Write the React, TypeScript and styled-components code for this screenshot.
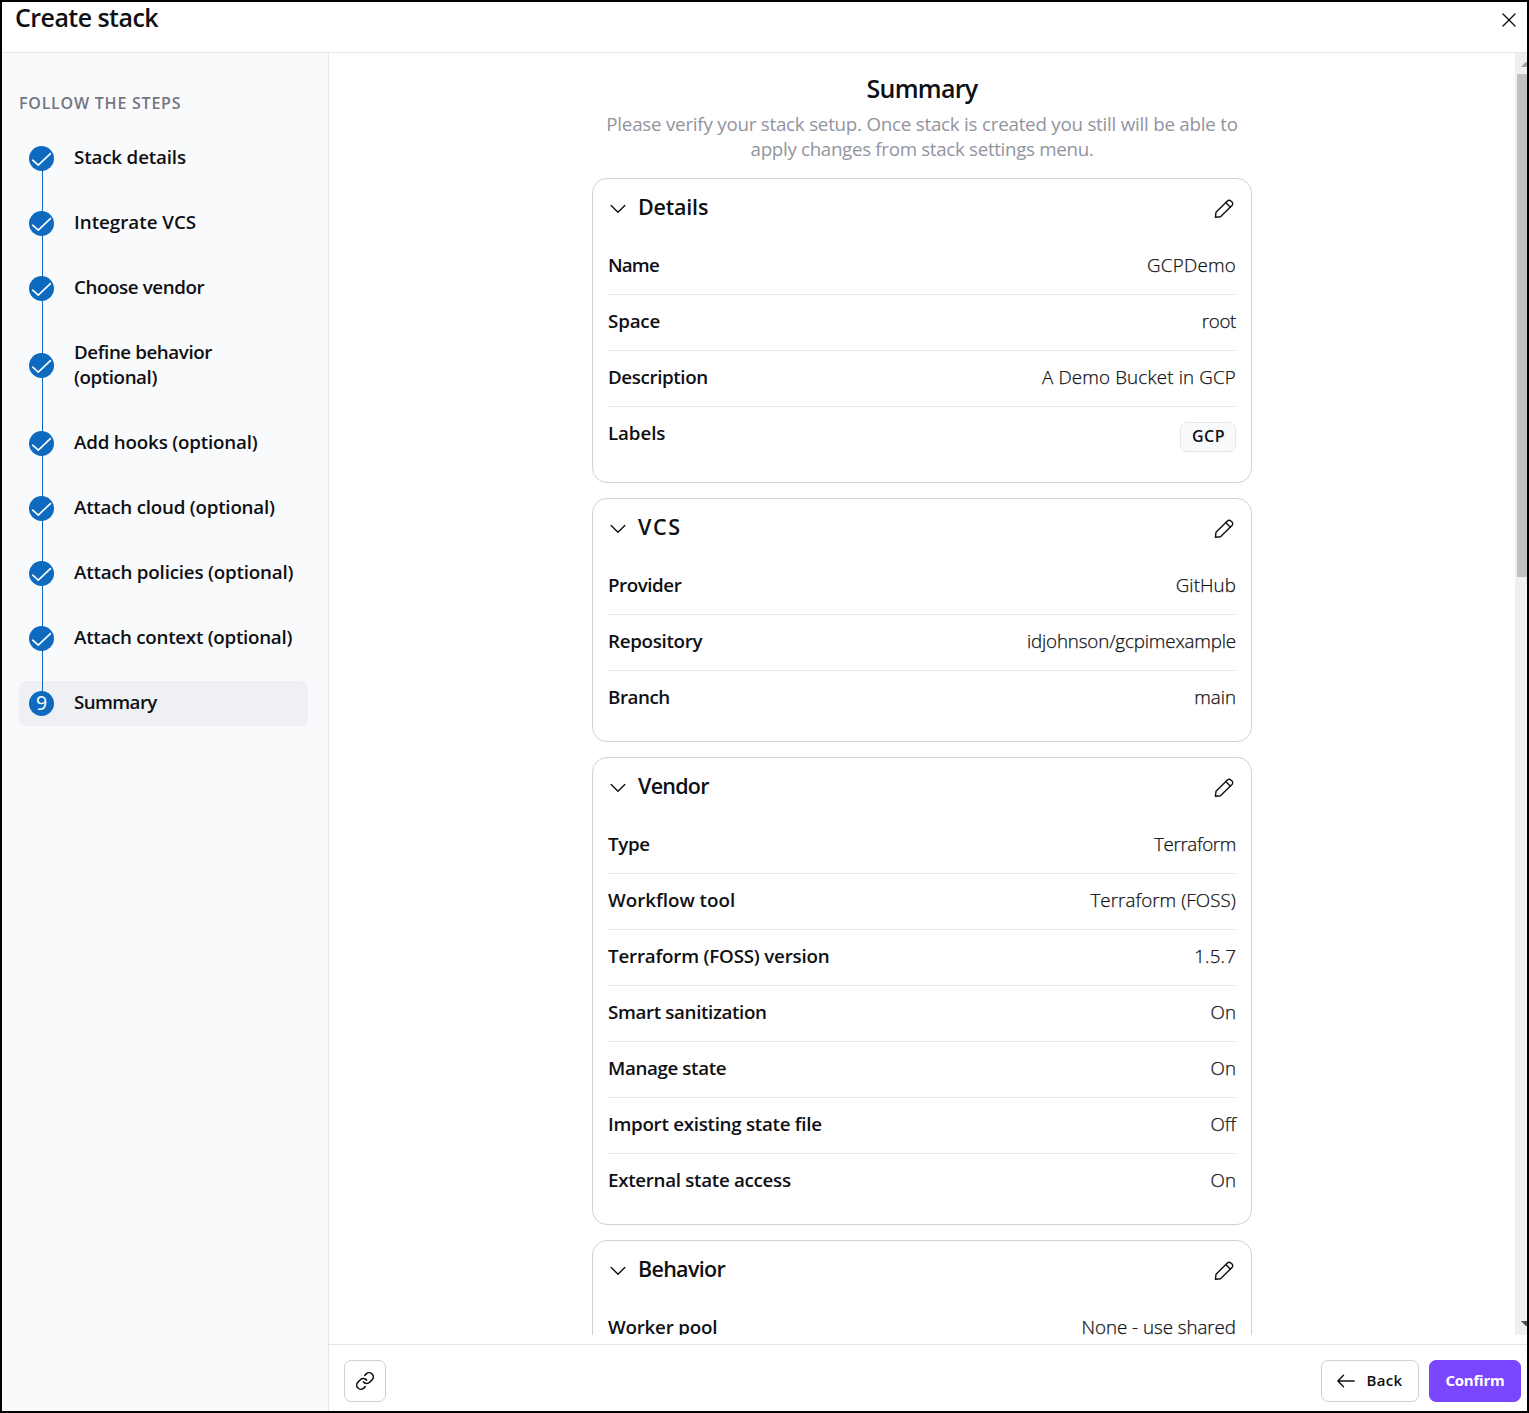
import React from 'react';
import styled, { createGlobalStyle, css } from 'styled-components';
import { Link } from 'lucide-react';

const color = {
  ink: '#0f1013',
  muted: '#9194a0',
  heading: '#737582',
  line: '#e5e6eb',
  rowLine: '#e8e9ec',
  outline: '#d0d0da',
  surface: '#f9fafc',
  active: '#eff0f4',
  blue: '#0d6abf',
  purple: '#7b46ff',
};

const GlobalStyle = createGlobalStyle`
  *, *::before, *::after { box-sizing: border-box; }
  body {
    margin: 0;
    background: #fff;
    color: ${color.ink};
    font-family: 'Open Sans', 'Noto Sans', sans-serif;
    font-size: 18.75px;
    line-height: 25px;
  }
  h1, h2, h3, p, ol, dl, dt, dd { margin: 0; padding: 0; }
`;

/* Letter spacing in px, tuned for each label */
type Tracked = { $track?: number };
const tracked = css<Tracked>`
  letter-spacing: ${({ $track = 0 }) => $track}px;
`;

const Drawer = styled.div`
  display: flex;
  flex-direction: column;
  width: 1529px;
  height: 1413px;
  border: 2px solid #000;
  overflow: hidden;
`;

const Header = styled.header`
  display: flex;
  justify-content: space-between;
  align-items: flex-start;
  flex: none;
  height: 51px;
  padding: 0 11px 0 13px;
  border-bottom: 1px solid ${color.line};
`;

const DrawerTitle = styled.h1<Tracked>`
  font-size: 25px;
  font-weight: 600;
  line-height: 30px;
  ${tracked}
`;

const IconButton = styled.button`
  display: flex;
  padding: 0;
  border: 0;
  background: none;
  color: inherit;
`;

const CloseButton = styled(IconButton)`
  margin-top: 11px;
`;

const Body = styled.div`
  display: flex;
  flex: 1;
  min-height: 0;
`;

const Sidebar = styled.aside`
  flex: none;
  width: 327px;
  padding: 39px 20px 0 17px;
  background: ${color.surface};
  border-right: 1px solid ${color.line};
`;

const SidebarHeading = styled.h2<Tracked>`
  font-size: 16px;
  font-weight: 600;
  line-height: 22px;
  color: ${color.heading};
  ${tracked}
`;

const StepList = styled.ol`
  display: flex;
  flex-direction: column;
  gap: 20px;
  margin-top: 22px;
  list-style: none;
`;

const connector = css`
  content: '';
  position: absolute;
  left: 23px;
  width: 1px;
  background: ${color.blue};
`;

const Step = styled.li<{ $active: boolean }>`
  position: relative;
  display: flex;
  align-items: center;
  gap: 20px;
  width: 289px;
  padding: 10px;
  border-radius: 7px;
  background: ${({ $active }) => ($active ? color.active : 'transparent')};

  &:not(:first-child)::before {
    ${connector}
    top: 0;
    bottom: 50%;
  }
  &:not(:last-child)::after {
    ${connector}
    top: 50%;
    bottom: -20px;
  }
`;

const StepMarker = styled.span<{ $raised: boolean }>`
  z-index: 1;
  display: flex;
  justify-content: center;
  align-items: center;
  flex: none;
  width: 25px;
  height: 25px;
  margin-bottom: ${({ $raised }) => ($raised ? 1 : 0)}px;
  padding-bottom: 3px;
  border-radius: 50%;
  background: ${color.blue};
  color: #fff;
  font-size: 19.5px;

  svg { margin-bottom: -3px; }
`;

const StepLabel = styled.span<Tracked>`
  margin: -2px 0 2px;
  font-weight: 600;
  white-space: pre;
  ${tracked}
`;

const Main = styled.main`
  display: flex;
  flex-direction: column;
  flex: 1;
  min-width: 0;
`;

const ScrollArea = styled.div`
  display: flex;
  flex: none;
  height: 1282px;
  overflow: hidden;
`;

const Content = styled.div`
  display: flex;
  flex-direction: column;
  align-items: center;
  flex: 1;
  padding-top: 19px;
`;

const PageTitle = styled.h2<Tracked>`
  font-size: 25px;
  font-weight: 600;
  line-height: 32px;
  ${tracked}
`;

const Intro = styled.p`
  display: flex;
  flex-direction: column;
  align-items: center;
  margin: 7px 0 17px;
  color: ${color.muted};
  white-space: nowrap;
`;

const IntroLine = styled.span<Tracked>`
  ${tracked}
`;

const Cards = styled.div`
  display: flex;
  flex-direction: column;
  gap: 15px;
`;

const Card = styled.section`
  flex: none;
  width: 660px;
  padding: 0 15px 15px;
  border: 1px solid ${color.outline};
  border-radius: 15px;
`;

const CardHeader = styled.header`
  display: flex;
  align-items: flex-start;
  height: 60px;
  padding-top: 13px;
`;

const Toggle = styled(IconButton)`
  margin: 7px 10px 0 0;
`;

const EditButton = styled(IconButton)`
  margin: 7px 2px 0 auto;
`;

const CardTitle = styled.h3<Tracked>`
  font-size: 21.5px;
  font-weight: 600;
  line-height: 29px;
  ${tracked}
`;

const Row = styled.div`
  display: flex;
  justify-content: space-between;
  align-items: flex-start;
  padding: 13px 0 17px;
  border-bottom: 1px solid ${color.rowLine};

  &:last-child { border-bottom: 0; }
`;

const Term = styled.dt<Tracked>`
  font-weight: 600;
  ${tracked}
`;

const Value = styled.dd<Tracked>`
  font-weight: 300;
  color: ${color.ink};
  -webkit-text-stroke: 0.25px ${color.ink};
  ${tracked}
`;

const Tag = styled.dd`
  height: 30px;
  width: 56px;
  margin: 2px 0 -2px;
  padding: 2px 0 0 11px;
  border: 1px solid ${color.line};
  border-radius: 7px;
  background: ${color.surface};
  font-size: 16px;
  font-weight: 600;
  line-height: 22px;
  letter-spacing: 0.45px;
`;

const Scrollbar = styled.div`
  display: flex;
  flex-direction: column;
  flex: none;
  width: 12px;
  background: #f0f0f0;
  overflow: hidden;

  svg { flex: none; }
`;

const Thumb = styled.div`
  width: 10px;
  height: 503px;
  margin: 0 0 auto 2px;
  background: #c1c1c1;
`;

const Footer = styled.footer`
  display: flex;
  align-items: flex-start;
  gap: 10px;
  flex: 1;
  margin-top: 9px;
  padding: 15px 6px 0 15px;
  border-top: 1px solid ${color.line};
`;

const Button = styled.button<{ $primary?: boolean; $width: number }>`
  display: flex;
  align-items: center;
  justify-content: center;
  width: ${({ $width }) => $width}px;
  height: 42px;
  padding: 0;
  border: 1px solid ${({ $primary }) => ($primary ? color.purple : color.outline)};
  border-radius: 7px;
  background: ${({ $primary }) => ($primary ? color.purple : '#fff')};
  color: ${({ $primary }) => ($primary ? '#fff' : color.ink)};
  font: ${({ $primary }) => ($primary ? 700 : 600)} 15px/20px 'Open Sans', 'Noto Sans', sans-serif;
`;

const ButtonLabel = styled.span<Tracked>`
  margin-bottom: 2px;
  ${tracked}
`;

const BackIcon = styled.svg`
  margin-right: 11px;
`;

const Spacer = styled.div`
  flex: 1;
`;

const stroke = { fill: 'none', stroke: 'currentColor', strokeLinecap: 'round', strokeLinejoin: 'round' } as const;

const CloseIcon = () => (
  <svg width="14" height="14" viewBox="0 0 14 14" {...stroke} strokeWidth="1.4">
    <path d="M1 1l12 12M13 1L1 13" />
  </svg>
);

const CheckIcon = () => (
  <svg width="25" height="25" viewBox="0 0 25 25" {...stroke} strokeWidth="1.6">
    <path d="M3.7 14.2l5.6 5L21.4 7.6" />
  </svg>
);

const ChevronIcon = () => (
  <svg width="20" height="20" viewBox="0 0 20 20" {...stroke} strokeWidth="1.4">
    <path d="M3.2 6.5l6.8 6.7 6.8-6.7" />
  </svg>
);

const PencilIcon = () => (
  <svg width="20" height="20" viewBox="0 0 20 20" {...stroke} strokeWidth="1.4">
    <path d="M1.4 18.3l.6-5L13.4 1.9a2.4 2.4 0 0 1 3.4 0l1.2 1.2a2.4 2.4 0 0 1 0 3.4L6.5 17.8z" />
    <path d="M11.8 3.6l4.6 4.6" />
  </svg>
);

const ArrowUp = () => (
  <svg width="12" height="21" viewBox="0 0 12 21">
    <path d="M6 14l5-5.3 5 5.3z" fill="#a3a3a3" />
  </svg>
);

const ArrowDown = () => (
  <svg width="12" height="21" viewBox="0 0 12 21">
    <path d="M6 7h10l-5 5.3z" fill="#505050" />
  </svg>
);

type Label = [text: string, track: number];

const steps: Label[] = [
  ['Stack details', -0.15],
  ['Integrate VCS', 0],
  ['Choose vendor', -0.4],
  ['Define behavior\n(optional)', -0.42],
  ['Add hooks (optional)', -0.19],
  ['Attach cloud (optional)', -0.22],
  ['Attach policies (optional)', -0.19],
  ['Attach context (optional)', -0.27],
  ['Summary', -0.6],
];

type Entry = { term: Label; value?: Label; tag?: string };

const cards: { title: Label; entries: Entry[] }[] = [
  {
    title: ['Details', -0.2],
    entries: [
      { term: ['Name', -0.85], value: ['GCPDemo', 0.25] },
      { term: ['Space', -0.17], value: ['root', -0.33] },
      { term: ['Description', -0.38], value: ['A Demo Bucket in GCP', 0.17] },
      { term: ['Labels', -0.1], tag: 'GCP' },
    ],
  },
  {
    title: ['VCS', 1.6],
    entries: [
      { term: ['Provider', -0.45], value: ['GitHub', 0.08] },
      { term: ['Repository', -0.3], value: ['idjohnson/gcpimexample', -0.15] },
      { term: ['Branch', -0.45], value: ['main', 0] },
    ],
  },
  {
    title: ['Vendor', -0.75],
    entries: [
      { term: ['Type', -0.33], value: ['Terraform', -0.35] },
      { term: ['Workflow tool', 0], value: ['Terraform (FOSS)', 0.07] },
      { term: ['Terraform (FOSS) version', -0.2], value: ['1.5.7', 0.16] },
      { term: ['Smart sanitization', -0.36], value: ['On', 0] },
      { term: ['Manage state', -0.38], value: ['On', 0] },
      { term: ['Import existing state file', -0.28], value: ['Off', 0] },
      { term: ['External state access', -0.3], value: ['On', 0] },
    ],
  },
  {
    title: ['Behavior', -0.7],
    entries: [{ term: ['Worker pool', -0.22], value: ['None - use shared', -0.04] }],
  },
];

export default function App() {
  return (
    <>
      <GlobalStyle />
      <Drawer>
        <Header>
          <DrawerTitle $track={-0.55}>Create stack</DrawerTitle>
          <CloseButton aria-label="Close"><CloseIcon /></CloseButton>
        </Header>
        <Body>
          <Sidebar>
            <SidebarHeading $track={0.77}>FOLLOW THE STEPS</SidebarHeading>
            <StepList>
              {steps.map(([text, track], i) => {
                const active = i === steps.length - 1;
                return (
                  <Step key={text} $active={active}>
                    <StepMarker $raised={text.includes('\n')}>{active ? i + 1 : <CheckIcon />}</StepMarker>
                    <StepLabel $track={track}>{text}</StepLabel>
                  </Step>
                );
              })}
            </StepList>
          </Sidebar>
          <Main>
            <ScrollArea>
              <Content>
                <PageTitle $track={-0.75}>Summary</PageTitle>
                <Intro>
                  <IntroLine $track={-0.23}>
                    Please verify your stack setup. Once stack is created you still will be able to
                  </IntroLine>
                  <IntroLine $track={-0.32}>apply changes from stack settings menu.</IntroLine>
                </Intro>
                <Cards>
                  {cards.map(({ title, entries }) => (
                    <Card key={title[0]}>
                      <CardHeader>
                        <Toggle aria-label="Collapse"><ChevronIcon /></Toggle>
                        <CardTitle $track={title[1]}>{title[0]}</CardTitle>
                        <EditButton aria-label="Edit"><PencilIcon /></EditButton>
                      </CardHeader>
                      <dl>
                        {entries.map(({ term, value, tag }) => (
                          <Row key={term[0]}>
                            <Term $track={term[1]}>{term[0]}</Term>
                            {value && <Value $track={value[1]}>{value[0]}</Value>}
                            {tag && <Tag>{tag}</Tag>}
                          </Row>
                        ))}
                      </dl>
                    </Card>
                  ))}
                </Cards>
              </Content>
              <Scrollbar>
                <ArrowUp />
                <Thumb />
                <ArrowDown />
              </Scrollbar>
            </ScrollArea>
            <Footer>
              <Button $width={42} aria-label="Copy link"><Link size={20} strokeWidth={1.9} /></Button>
              <Spacer />
              <Button $width={98}>
                <BackIcon width="18" height="14" viewBox="0 0 18 14" {...stroke} strokeWidth="1.4">
                  <path d="M17.2 7H1M6.5 1.2L.9 7l5.6 5.8" />
                </BackIcon>
                <ButtonLabel $track={0.4}>Back</ButtonLabel>
              </Button>
              <Button $width={92} $primary>
                <ButtonLabel $track={-0.2}>Confirm</ButtonLabel>
              </Button>
            </Footer>
          </Main>
        </Body>
      </Drawer>
    </>
  );
}
